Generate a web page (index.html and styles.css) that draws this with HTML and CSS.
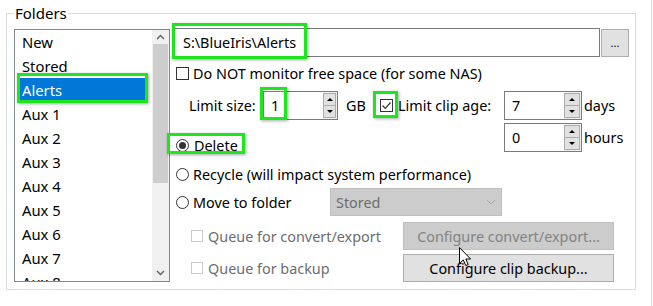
FILE: index.html
```html
<!DOCTYPE html>
<html>
<head>
<meta charset="utf-8">
<title>Folders</title>
<link rel="stylesheet" href="styles.css">
</head>
<body>
<div class="page">
  <fieldset class="group">
    <legend>Folders</legend>
    <div class="listbox">
      <ul class="items">
        <li>New</li>
        <li>Stored</li>
        <li class="sel"><span class="mark mark-item"></span>Alerts</li>
        <li>Aux 1</li>
        <li>Aux 2</li>
        <li>Aux 3</li>
        <li>Aux 4</li>
        <li>Aux 5</li>
        <li>Aux 6</li>
        <li>Aux 7</li>
        <li>Aux 8</li>
      </ul>
      <div class="vscroll">
        <div class="sbtn up"><svg width="9" height="6" viewBox="0 0 9 6"><polyline points="1,5 4.5,1.5 8,5" fill="none" stroke="#606060" stroke-width="1.4"/></svg></div>
        <div class="thumb"></div>
        <div class="track"></div>
        <div class="sbtn down"><svg width="9" height="6" viewBox="0 0 9 6"><polyline points="1,1 4.5,4.5 8,1" fill="none" stroke="#606060" stroke-width="1.4"/></svg></div>
      </div>
    </div>

    <div class="settings">
      <div class="path-row">
        <div class="textbox path"><span class="mark mark-path"></span>S:\BlueIris\Alerts</div>
        <div class="btn browse">...</div>
      </div>

      <div class="row check-row">
        <span class="chk"></span>
        <span class="lbl">Do NOT monitor free space (for some NAS)</span>
      </div>

      <div class="limits">
        <div class="limit-size">
          <span class="lim-label">Limit size:</span>
          <div class="spin small">
            <span class="mark mark-size"></span>
            <div class="spin-text">1</div>
            <div class="spin-btns"><div class="sb"><i class="tri-up"></i></div><div class="sb"><i class="tri-down"></i></div></div>
          </div>
          <span class="unit-gb">GB</span>
          <span class="chk checked"><span class="mark mark-chk"></span><svg width="11" height="11" viewBox="0 0 11 11"><polyline points="1.5,5.5 4.3,8.3 9.5,2.5" fill="none" stroke="#333" stroke-width="1.2"/></svg></span>
          <span class="age-label">Limit clip age:</span>
        </div>
        <div class="spin">
          <div class="spin-text">7</div>
          <div class="spin-btns"><div class="sb"><i class="tri-up"></i></div><div class="sb"><i class="tri-down"></i></div></div>
        </div>
        <span class="unit">days</span>

        <div class="delete-row">
          <span class="mark mark-del"></span>
          <span class="radio on"></span>
          <span class="lbl">Delete</span>
        </div>
        <div class="spin">
          <div class="spin-text">0</div>
          <div class="spin-btns"><div class="sb"><i class="tri-up"></i></div><div class="sb"><i class="tri-down"></i></div></div>
        </div>
        <span class="unit">hours</span>
      </div>

      <div class="row recycle-row">
        <span class="radio"></span>
        <span class="lbl">Recycle (will impact system performance)</span>
      </div>

      <div class="move-row">
        <div class="move-label">
          <span class="radio"></span>
          <span class="lbl">Move to folder</span>
        </div>
        <div class="combo">
          <span>Stored</span>
          <svg width="10" height="6" viewBox="0 0 10 6"><polyline points="1,1 5,5 9,1" fill="none" stroke="#a8a8a8" stroke-width="1"/></svg>
        </div>
      </div>

      <div class="queue-row first">
        <div class="queue-label">
          <span class="chk disabled"></span>
          <span class="lbl">Queue for convert/export</span>
        </div>
        <div class="btn wide disabled">Configure convert/export...</div>
      </div>

      <div class="queue-row second">
        <div class="queue-label">
          <span class="chk disabled"></span>
          <span class="lbl">Queue for backup</span>
        </div>
        <div class="btn wide">Configure clip backup...</div>
      </div>
    </div>
  </fieldset>
  <div class="edge"></div>
  <svg class="cursor" width="13" height="20" viewBox="0 0 13 20"><path d="M0.5,0.5 L0.5,16.5 L4.3,12.9 L6.8,18.6 L9.2,17.6 L6.8,12 L11.6,12 Z" fill="#fff" stroke="#000" stroke-width="1" stroke-linejoin="miter"/></svg>
</div>
</body>
</html>
```
FILE: styles.css
```css
* { box-sizing: border-box; }
html, body { margin: 0; padding: 0; background: #fff; }
body {
  font-family: "Noto Sans", "Open Sans", "Liberation Sans", sans-serif;
  font-size: 14.4px;
  color: #000;
  width: 653px;
  height: 306px;
  overflow: hidden;
}
.page { position: relative; display: flex; height: 306px; }

.group {
  margin: 3px 0 0 6px;
  width: 630px;
  height: 287px;
  border: 1px solid #dcdcdc;
  padding: 5px 6px 0 7px;
  display: flex;
  gap: 4px;
  align-items: flex-start;
  min-width: 0;
}
.group legend {
  padding: 0 1px;
  line-height: 20px;
  height: 20px;
  font-size: 15px;
}

/* list box */
.listbox {
  flex: none;
  width: 156px;
  height: 253px;
  margin-top: 1px;
  border: 1px solid #828790;
  display: flex;
  overflow: hidden;
}
.items { list-style: none; margin: 0; padding: 0; flex: 1; overflow: hidden; font-size: 14.8px; }
.items li { height: 24px; line-height: 24px; padding-left: 7px; white-space: nowrap; }
.items li.sel {
  position: relative;
  background: #0078d7;
  color: #fff;
  margin: 0 4px 0 2px;
  padding-left: 5px;
}
.vscroll { flex: none; width: 17px; background: #f0f0f0; display: flex; flex-direction: column; }
.sbtn { height: 14px; display: flex; align-items: center; justify-content: center; }
.sbtn.down { height: 17px; }
.thumb { height: 139px; margin: 0 1px; background: #cdcdcd; }
.track { flex: 1; }

/* annotation marks */
.mark {
  position: absolute;
  border: 3px solid #1ee61e;
  box-shadow: 1px 1px 3px rgba(0,0,0,0.35);
  pointer-events: none;
}
.mark-item { left: 0; top: -5px; width: 131px; height: 30px; }
.mark-path { left: -3px; top: -6px; width: 135px; height: 36px; }
.mark-size { left: -3px; top: -4px; width: 27px; height: 33px; }
.mark-chk { left: -8px; top: -9px; width: 25px; height: 27px; }
.mark-del { left: -7px; top: -5px; width: 78px; height: 21px; }

/* right side */
.settings { flex: none; width: 455px; display: flex; flex-direction: column; }
.path-row { display: flex; height: 29px; }
.textbox {
  border: 1px solid #7a7a7a;
  background: #fff;
}
.textbox.path {
  position: relative;
  width: 426px;
  height: 29px;
  padding-left: 8px;
  line-height: 27px;
}
.btn {
  display: flex;
  align-items: center;
  justify-content: center;
  background: #e1e1e1;
  border: 1px solid #adadad;
  white-space: nowrap;
}
.btn.browse { width: 28px; height: 28px; margin: 1px 0 0 1px; font-size: 11px; padding-bottom: 2px; }

.row { display: flex; align-items: center; height: 22px; }
.check-row { margin-top: 5px; }
.chk {
  position: relative;
  flex: none;
  width: 13px;
  height: 13px;
  border: 1px solid #333;
  background: #fff;
  display: flex;
  align-items: center;
  justify-content: center;
}
.chk.disabled { border-color: #cccccc; }
.check-row .chk { margin-left: 2px; }
.check-row .lbl { margin-left: 4px; }

.radio {
  flex: none;
  width: 13px;
  height: 13px;
  border: 1px solid #333;
  border-radius: 50%;
  background: #fff;
  display: flex;
  align-items: center;
  justify-content: center;
}
.radio.on::after { content: ""; width: 7px; height: 7px; border-radius: 50%; background: #333; }

.limits {
  margin-top: 7px;
  display: grid;
  grid-template-columns: 330px 78px auto;
  grid-template-rows: 29px 29px;
  row-gap: 3px;
  align-items: center;
}
.limit-size { display: flex; align-items: center; padding-left: 15px; height: 29px; }
.lim-label { width: 74px; flex: none; }
.spin { display: flex; height: 29px; position: relative; }
.spin-text {
  width: 60px;
  border: 1px solid #7a7a7a;
  border-right: none;
  padding-left: 7px;
  line-height: 27px;
  background: #fff;
}
.spin-btns { width: 18px; display: flex; flex-direction: column; border: 1px solid #7a7a7a; border-left: none; padding: 1px 1px 1px 0; background: #f0f0f0; }
.spin.small .spin-btns { width: 15px; }
.sb { flex: 1; background: #e1e1e1; border: 1px solid #adadad; display: flex; align-items: center; justify-content: center; }
.sb + .sb { border-top: none; }
.tri-up { width: 0; height: 0; border-left: 3px solid transparent; border-right: 3px solid transparent; border-bottom: 3px solid #000; }
.tri-down { width: 0; height: 0; border-left: 3px solid transparent; border-right: 3px solid transparent; border-top: 3px solid #000; }
.unit-gb { width: 34px; flex: none; margin-left: 8px; }
.age-label { margin-left: 5px; white-space: nowrap; }
.unit { margin-left: 2px; }

.delete-row {
  position: relative;
  display: flex;
  align-items: center;
  align-self: end;
  height: 14px;
  padding-left: 2px;
}
.delete-row .lbl { margin-left: 5px; }

.recycle-row { margin-top: 11px; padding-left: 2px; }
.recycle-row .lbl { margin-left: 4px; }

.move-row { display: flex; align-items: center; height: 28px; margin-top: 3px; }
.move-label { width: 156px; display: flex; align-items: center; padding-left: 2px; }
.move-label .lbl { margin-left: 4px; }
.combo {
  width: 172px;
  height: 28px;
  background: #cccccc;
  border: 1px solid #bfbfbf;
  color: #6d6d6d;
  display: flex;
  align-items: center;
  justify-content: space-between;
  padding: 0 5px 0 5px;
}

.queue-row { display: flex; align-items: center; height: 28px; }
.queue-row.first { margin-top: 6px; }
.queue-row.second { margin-top: 4px; height: 28px; }
.queue-label { width: 229px; display: flex; align-items: center; padding-left: 17px; color: #6d6d6d; }
.queue-label .chk { width: 12px; height: 12px; }
.queue-label .lbl { margin-left: 5px; }
.btn.wide { width: 211px; height: 28px; }
.btn.wide.disabled { background: #cccccc; border-color: #bfbfbf; color: #838383; }

.edge { margin-left: auto; width: 2px; height: 306px; border-left: 1px solid #dadada; }

.cursor { position: absolute; left: 459px; top: 247px; }
```
